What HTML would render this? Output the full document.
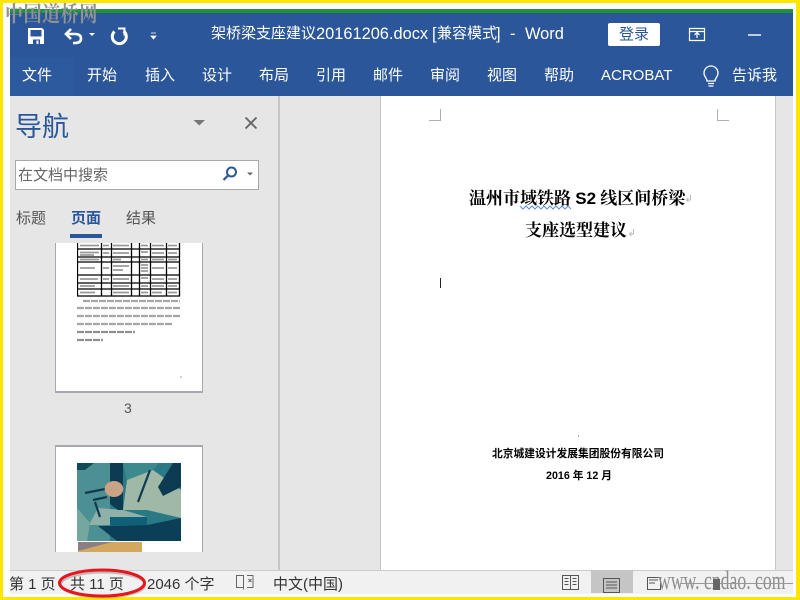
<!DOCTYPE html>
<html lang="zh"><head><meta charset="utf-8"><style>
html,body{margin:0;padding:0;width:800px;height:600px;overflow:hidden;background:#fff}
.a{position:absolute;white-space:nowrap}
body{font-family:"Liberation Sans","Noto Sans CJK SC",sans-serif;position:relative}
.t{color:#fff;font-size:15px;line-height:20px;top:66px}
.st{color:#333;font-size:15px;line-height:20px;top:575px}
.tt{color:#fff;line-height:20px;top:24px;font-size:15px}
.l{font-size:16.400px}
.serif{font-family:"Liberation Serif","Noto Serif CJK SC",serif;font-weight:bold;color:#000}
</style></head><body>
<!-- frame -->
<div class="a" style="left:0;top:0;width:800px;height:3px;background:#ffe600"></div>
<div class="a" style="left:0;top:0;width:3px;height:600px;background:#ffe600"></div>
<div class="a" style="left:796px;top:0;width:4px;height:600px;background:#ffe600"></div>
<div class="a" style="left:0;top:597px;width:800px;height:3px;background:#ffe600"></div>
<!-- title -->
<div class="a" style="left:10px;top:9px;width:783px;height:4px;background:#23903a"></div>
<div class="a" style="left:10px;top:13px;width:783px;height:83px;background:#2b579a"></div>
<div class="a" style="left:10px;top:58px;width:64px;height:38px;background:#2d5a9e"></div>
<!-- QAT icons -->
<svg class="a" style="left:0;top:0" width="170" height="50" viewBox="0 0 170 50">
<path d="M28 28h14l2 2v14H28z" fill="#fff"/><path d="M30.500 30h11v6.500h-11z" fill="#2b579a"/><path d="M33 39.500h7v4.500h-7z" fill="#2b579a"/><path d="M36.500 40.500h2v3.500h-2z" fill="#fff"/>
<path d="M71 29l-5 5 5 5M66 34h9q6 0 6 4.500t-6 4.500h-2" fill="none" stroke="#fff" stroke-width="2.600"/>
<path d="M89 33h6l-3 3z" fill="#fff"/>
<path d="M123.500 31a7 7 0 1 1-9 .5" fill="none" stroke="#fff" stroke-width="3"/><path d="M118 28.500h6.500v7" fill="none" stroke="#fff" stroke-width="2"/>
<path d="M151 33h5M151 36h5l-2.500 3z" fill="#fff" stroke="#fff" stroke-width=".8"/>
</svg>
<div class="a tt" style="left:211px">架桥梁支座建议</div>
<div class="a tt l" style="left:316px">20161206.docx</div>
<div class="a tt l" style="left:432px">[</div>
<div class="a tt" style="left:437px">兼容模式</div>
<div class="a tt l" style="left:496px">]</div>
<div class="a tt l" style="left:510px">-</div>
<div class="a tt l" style="left:525px">Word</div>
<div class="a" style="left:608px;top:23px;width:52px;height:23px;background:#fff;border-radius:2px;color:#2b579a;font-size:15px;line-height:23px;text-align:center">登录</div>
<svg class="a" style="left:680px;top:20px" width="100" height="30">
<path d="M9.500 8.500h15v12h-15zM9.500 11.500h15" fill="none" stroke="#fff" stroke-width="1.200"/><path d="M17 18v-5M14.500 15l2.500-2.500 2.500 2.500" fill="none" stroke="#fff" stroke-width="1.200"/>
<path d="M68 15h13" stroke="#fff" stroke-width="1.400"/></svg>
<!-- tabs -->
<div class="a t" style="left:22px">文件</div><div class="a t" style="left:87px">开始</div><div class="a t" style="left:145px">插入</div><div class="a t" style="left:202px">设计</div><div class="a t" style="left:259px">布局</div><div class="a t" style="left:316px">引用</div><div class="a t" style="left:373px">邮件</div><div class="a t" style="left:430px">审阅</div><div class="a t" style="left:487px">视图</div><div class="a t" style="left:544px">帮助</div><div class="a t" style="left:601px">ACROBAT</div><div class="a t" style="left:732px">告诉我</div>
<svg class="a" style="left:700px;top:65px" width="22" height="25"><path d="M7 16c0-3-3-4-3-8a6.800 6.800 0 0 1 14 0c0 4-3 5-3 8z" fill="none" stroke="#fff" stroke-width="1.300"/><path d="M8 18.500h6M8.500 21h5" stroke="#fff" stroke-width="1.300"/></svg>
<!-- body -->
<div class="a" style="left:10px;top:96px;width:783px;height:474px;background:#e6e6e6"></div>
<div class="a" style="left:278px;top:96px;width:2px;height:474px;background:#c6c6c6"></div>
<div class="a" style="left:380px;top:96px;width:1px;height:474px;background:#c6c6c6"></div>
<div class="a" style="left:381px;top:96px;width:394px;height:474px;background:#fff"></div>
<div class="a" style="left:775px;top:96px;width:1px;height:474px;background:#c6c6c6"></div>
<!-- nav -->
<div class="a" style="left:15px;top:110px;font-size:27px;line-height:34px;color:#2b579a">导航</div>
<svg class="a" style="left:190px;top:112px" width="75" height="22"><path d="M3.500 8h11.500l-5.700 5.500z" fill="#777"/><path d="M55.500 5.500l11 11M66.500 5.500l-11 11" stroke="#666" stroke-width="1.900"/></svg>
<div class="a" style="left:15px;top:160px;width:242px;height:28px;background:#fff;border:1px solid #a9a9a9"></div>
<div class="a" style="left:18px;top:166px;font-size:15px;line-height:20px;color:#666">在文档中搜索</div>
<svg class="a" style="left:220px;top:163px" width="36" height="22"><circle cx="11.500" cy="9" r="4.500" fill="none" stroke="#2b579a" stroke-width="2"/><path d="M8 12.500l-4.500 4.500" stroke="#2b579a" stroke-width="2.200"/><path d="M27 9.500h6l-3 3z" fill="#666"/></svg>
<div class="a" style="left:16px;top:209px;font-size:15px;line-height:20px;color:#555">标题</div>
<div class="a" style="left:71px;top:209px;font-size:15px;line-height:20px;color:#2b579a;font-weight:bold">页面</div>
<div class="a" style="left:126px;top:209px;font-size:15px;line-height:20px;color:#555">结果</div>
<div class="a" style="left:70px;top:234px;width:32px;height:4px;background:#2b579a"></div>
<!-- thumb 1 -->
<div class="a" style="left:55px;top:243px;width:146px;height:148px;background:#fff;border:solid #a5a8ae;border-width:0 1px 2px 1px"></div>
<svg class="a" style="left:77px;top:243px" width="104" height="54" fill="none">
<g stroke="#999" stroke-width="1.700">
<path d="M3 2.500h19M26 2.500h6M36 2.500h16M64 2.500h7M75 2.500h12M91 2.500h9M3 9.500h19M3 12h14M26 10h6M36 10h16M64 9h7M75 10h12M91 10h9M3 16.500h19M36 16.500h8M64 16.500h7M75 16.500h12M91 16.500h9M3 25h15M26 25h6M36 23h16M36 27h10M64 22h7M64 25h7M64 28h7M75 25h12M91 25h9M3 36h18M26 36h6M36 36h16M64 35h7M75 36h12M91 36h9M3 43h15M36 43h16M64 43h7M75 43h12M91 43h9M3 49.500h15M36 49.500h16M64 49.500h7M75 49.500h10M91 49.500h9"/></g>
<path stroke="#000" stroke-width="1.300" d="M.500 0v53.500M24.500 0v53.500M34.500 0v53.500M54.500 0v53.500M62.500 0v53.500M73.500 0v53.500M89.500 0v53.500M102.500 0v53.500M0 6h103M0 14h103M0 19h103M0 32h103M0 40h103M0 46h103M0 53h103"/></svg>
<svg class="a" style="left:77px;top:296px" width="110" height="85" stroke="#a5a5a5" stroke-width="2.200" fill="none">
<path d="M6 5h97M0 12h103M0 20h103M0 28h96" stroke-dasharray="7 1"/><path d="M0 36h58M0 44h26" stroke="#909090" stroke-dasharray="7 1"/><path d="M103 81h2" stroke="#aaa" stroke-width="1"/></svg>
<div class="a" style="left:124px;top:400px;font-size:14px;line-height:16px;color:#555">3</div>
<!-- thumb 2 -->
<div class="a" style="left:55px;top:445px;width:146px;height:105px;background:#fff;border:solid #a5a8ae;border-width:2px 1px 0 1px"></div>
<svg class="a" style="left:77px;top:463px" width="104" height="89" viewBox="0 0 104 89">
<rect width="104" height="78" fill="#2a7a85"/>
<path d="M0 0h33v78H0z" fill="#4c9094"/>
<path d="M0 45l13 15-3 18H0z" fill="#74a89e"/>
<path d="M0 0h17L8 7H0z" fill="#0e4a5c"/>
<path d="M46 0h36l-6 7-26 10z" fill="#3d8a8e"/>
<path d="M50 17l26-10 28 20v28l-34-8-24 0z" fill="#a0b9a6"/>
<path d="M13 60l8-15 25 2 24 7v8H13z" fill="#90b1a7"/>
<path d="M33 0h13v47H41l-8-6z" fill="#0d3b52"/>
<path d="M81 24L96 0h8v24l-18 9z" fill="#0d3b52"/>
<path d="M21 63l49-1 34-7v23H40z" fill="#0b3f58"/>
<path d="M33 54l37 0v8H33z" fill="#0f6078"/>
<path d="M8 30l20-4M16 37l14-3M18 39l5 15M61 39l12-32" stroke="#103a52" stroke-width="2.200" fill="none"/>
<ellipse cx="37" cy="26" rx="9.300" ry="8" fill="#c9a386"/>
<path d="M1 79h64v10H1z" fill="#d2a75f"/><path d="M1 79h34L1 88z" fill="#8a7f85"/>
</svg>
<!-- page content -->
<svg class="a" style="left:425px;top:106px" width="310" height="18" fill="none" stroke="#b0b0b0"><path d="M15.500 3v11.500H4M292.500 3v11.500H304"/></svg>
<div class="a serif" style="left:469px;top:188px;font-size:17px;line-height:22px">温州市域铁路 <span style="font-family:'Liberation Sans',sans-serif">S2</span> 线区间桥梁</div>
<div class="a serif" style="left:525px;top:220px;font-size:17px;line-height:22px">支座选型建议</div>
<svg class="a" style="left:519px;top:204px" width="60" height="6" fill="none" stroke="#5b8ed6"><path d="M1 2l3 3 3-3 3 3 3-3 3 3 3-3 3 3 3-3 3 3 3-3 3 3 3-3 3 3 3-3 3 3 3-3 3 3"/></svg>
<svg class="a" style="left:685px;top:194px" width="8" height="10" fill="none" stroke="#bbb"><path d="M5.500 1v5H2M3.500 4L1.500 6l2 2"/></svg>
<svg class="a" style="left:628px;top:228px" width="8" height="10" fill="none" stroke="#bbb"><path d="M5.500 1v5H2M3.500 4L1.500 6l2 2"/></svg>
<div class="a" style="left:440px;top:278px;width:1px;height:10px;background:#222"></div>
<div class="a" style="left:578px;top:435px;width:1px;height:2px;background:#aaa"></div>
<div class="a serif" style="left:492px;top:447px;font-size:10.750px;line-height:14px;font-family:'Liberation Sans','Noto Sans CJK SC',sans-serif">北京城建设计发展集团股份有限公司</div>
<div class="a serif" style="left:546px;top:469px;font-size:10.700px;line-height:14px;font-family:'Liberation Sans','Noto Sans CJK SC',sans-serif">2016 年 12 月</div>
<!-- status -->
<div class="a" style="left:10px;top:570px;width:783px;height:24px;background:#f1f1f1;border-top:1px solid #ccc;box-sizing:border-box"></div>
<div class="a st" style="left:9px">第 1 页</div><div class="a st" style="left:70px">共 11 页</div><div class="a st" style="left:147px">2046 个字</div><div class="a st" style="left:273px">中文(中国)</div>
<svg class="a" style="left:234px;top:573px" width="22" height="18" fill="none" stroke="#666"><path d="M2.500 2.500h7v12h-7zM9.500 2.500v14M13 2.500h6v12h-6"/><path d="M14.500 6l3 3M17.500 6l-3 3"/></svg>
<svg class="a" style="left:52px;top:562px" width="105" height="38" fill="none"><ellipse cx="51" cy="23" rx="42" ry="12.500" stroke="#999" stroke-width="2" opacity=".6"/><ellipse cx="50" cy="21" rx="42.500" ry="13" stroke="#e8151b" stroke-width="3"/></svg>
<div class="a" style="left:591px;top:570px;width:42px;height:23px;background:#c5c5c5"></div>
<svg class="a" style="left:555px;top:570px" width="125" height="24" fill="none" stroke="#555"><path d="M7.500 5.500h8v14h-8zM15.500 5.500h8v14h-8zM9.500 8.500h4M9.500 11.500h4M9.500 14.500h4M17.500 8.500h4M17.500 11.500h4M17.500 14.500h4"/><path d="M48.500 8.500h16v14h-16zM51 12h11M51 15h11M51 18h11"/><path d="M92.500 7.500h13v12h-13zM94 10h9M94 13h6"/></svg>
<!-- watermarks -->
<div class="a" style="left:658px;top:566px;font-family:'Liberation Serif',serif;font-size:26px;line-height:30px;color:#8d8d8d;transform:scaleX(.68);transform-origin:left">www. cndao. com</div>
<div class="a" style="left:680px;top:583px;width:113px;height:1px;background:#999"></div>
<div class="a" style="left:713px;top:579px;width:7px;height:11px;background:#666"></div>
<div class="a" style="left:5px;top:0;font-family:'Liberation Serif','Noto Serif CJK SC',serif;font-size:18px;line-height:24px;letter-spacing:.6px;font-weight:bold;color:#8e9396;transform:scaleY(1.2);transform-origin:top">中国道桥网</div>
</body></html>
